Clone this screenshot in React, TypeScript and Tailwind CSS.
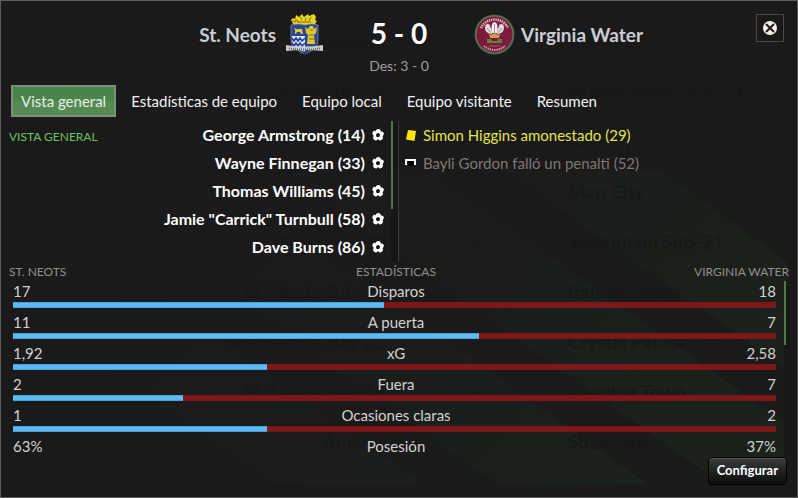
type Stat = {
  label: string;
  home: string;
  away: string;
  share?: number;
};

const tabs = ['Vista general', 'Estadísticas de equipo', 'Equipo local', 'Equipo visitante', 'Resumen'];

const goals = [
  'George Armstrong (14)',
  'Wayne Finnegan (33)',
  'Thomas Williams (45)',
  'Jamie "Carrick" Turnbull (58)',
  'Dave Burns (86)',
];

const stats: Stat[] = [
  { label: 'Disparos', home: '17', away: '18', share: 48.6 },
  { label: 'A puerta', home: '11', away: '7', share: 61.1 },
  { label: 'xG', home: '1,92', away: '2,58', share: 33.3 },
  { label: 'Fuera', home: '2', away: '7', share: 22.3 },
  { label: 'Ocasiones claras', home: '1', away: '2', share: 33.3 },
  { label: 'Posesión', home: '63%', away: '37%' },
];

const fixtures = [
  ['Cockfosters', '', 'Aylesbury'],
  ['Fulham Sub-18', '-', 'Huddersfield Sub-18'],
  ['Oldham', '', 'Burnley'],
  ['', '-', 'Man City'],
  ['Salford Sub-21', '-', 'Tottenham Sub-21'],
  ['St. Neots Sub-21', '-', 'Raunds Town'],
  ['Sunderland Sub-21', '-', 'Crystal Palace Sub-21'],
  ['St. Neots Sub-18', '-', 'Canning Town'],
  ['Amiens', '-', 'Sheff Utd'],
];

// fixture list that shows faintly through the dialog
function Backdrop() {
  return (
    <div aria-hidden="true" className="absolute inset-0 overflow-hidden">
      <svg className="absolute inset-0 w-full h-full" viewBox="0 0 798 498" preserveAspectRatio="none">
        <defs>
          <linearGradient id="fade" gradientUnits="userSpaceOnUse" x1="250" y1="150" x2="620" y2="485">
            <stop offset="0" stopColor="#1b211b" stopOpacity="0" />
            <stop offset="0.5" stopColor="#1b211b" stopOpacity="0.4" />
            <stop offset="1" stopColor="#1b211b" stopOpacity="1" />
          </linearGradient>
        </defs>
        <g fill="url(#fade)">
          <path d="M272 485H422L-20 170H-170Z" />
          <path d="M498 485H648L206 170H56Z" />
          <path d="M723 485H788V425L430 170H281Z" />
          <path d="M788 370V262L660 170H507Z" />
        </g>
      </svg>
      <div className="relative pt-4 text-[19px] leading-[50px] font-bold text-[#171917]">
        {fixtures.map(([home, score, away]) => (
          <div key={away} className="grid grid-cols-[386fr_182px_230fr]">
            <span className="text-right whitespace-nowrap">{home}</span>
            <span className="text-center">{score}</span>
            <span className="whitespace-nowrap">{away}</span>
          </div>
        ))}
      </div>
    </div>
  );
}

function HomeCrest() {
  return (
    <svg className="w-[37px] h-[42px] shrink-0" viewBox="0 0 37 42" aria-hidden="true">
      <path d="M7 11 5 7l2-2 2 1 1-4 3 2 3-3 2 3 4-3 1 2 5-2 2 3-1 3 2 1-2 3-3 1H9Z" fill="#e6d21f" />
      <path d="M9 7l3 1M14 4l2 3M20 5l-1 3M25 4l-2 4M11 9h14" stroke="#80701a" fill="none" />
      <path d="M6 8l4 1M10 7l3 2" stroke="#c25a2a" fill="none" />
      <path d="M5 12q7-2 14 0 7-2 13 0v15q0 9-13 14Q5 36 5 27Z" fill="#29439b" stroke="#8f98ac" strokeWidth="0.7" />
      <path d="M6 23h13v16Q6 35 6 27Z" fill="#dfe6f2" />
      <path d="M6 25l2 3 2-3 2 3 2-3 2 3 3-3M6 30l2 3 2-3 2 3 2-3 2 3 3-3" stroke="#29439b" strokeWidth="1.6" fill="none" />
      <path d="M8 14l2 2h6l1 5h-2l-1-2h-3l-1 2H9v-4Z" fill="#ddc729" />
      <path d="M24 13h3l1 3 3-2-1 6-2 2 1 9h-8l1-9-2-2-1-6 3 2Z" fill="#ddc729" />
      <path d="M24 17h3M23 22h5M23 26h5" stroke="#77702f" />
      <path d="M0 32q18 3 37 0v6q-19-2-37 0Z" fill="#c9cbcb" />
      <path d="M3 35.500q16 2 31 0" stroke="#666" strokeWidth="1.800" strokeDasharray="1 1" fill="none" />
      <path d="M16 38.500h6l-3 3Z" fill="#263b7d" />
    </svg>
  );
}

function AwayCrest() {
  return (
    <svg className="w-[41px] h-[41px] shrink-0" viewBox="0 0 41 41" aria-hidden="true">
      <circle cx="20.500" cy="20.500" r="20" fill="#23714a" />
      <circle cx="20.500" cy="20.500" r="18.500" fill="#7b1c3c" stroke="#b0795c" strokeWidth="0.7" />
      <path d="M7 14A15 15 0 0 1 34 14" stroke="#d9c3cb" strokeWidth="2.600" strokeDasharray="1.300 0.9" fill="none" />
      <path d="M10 32A16 16 0 0 0 31 32" stroke="#cdb2bc" strokeWidth="2" strokeDasharray="1.300 0.9" fill="none" />
      <path d="M18 19q-2-10 2.500-11 4.500 1 2.500 11Z" fill="#f1eeee" />
      <path d="M17 20q-6-1-6-6 0-4 3-4 3 1 2 3 2 2 2 7ZM24 20q6-1 6-6 0-4-3-4-3 1-2 3-2 2-2 7Z" fill="#e3dcde" />
      <path d="M20.500 10v9M13 14l4 5M28 14l-4 5" stroke="#8c6672" strokeWidth="0.7" />
      <path d="M15 19l2 2 3.500-2 3.500 2 2-2-1 5h-9Z" fill="#c9a352" />
      <path d="M13 25h4l1 2h5l1-2h4v4H13Z" fill="#6d7d35" />
      <path d="M15 32h11" stroke="#a9798a" strokeWidth="0.7" />
    </svg>
  );
}

function BallIcon() {
  return (
    <svg className="w-3 h-3 shrink-0" viewBox="0 0 12 12" aria-hidden="true">
      <circle cx="6" cy="6" r="6" fill="#fff" />
      <path d="M6 3.800 8.200 5.400 7.400 8H4.600L3.800 5.400Z" fill="#1a1a1a" />
      <path d="M1 0h4L3.200 2.500ZM8 0h4v3L9 2.500ZM0 4.500 1.800 7 0 10ZM12 5l-1.500 2.500L12 10ZM4 12l2-2 2 2Z" fill="#1a1a1a" />
    </svg>
  );
}

function StatRows({ stat }: { stat: Stat }) {
  return (
    <tbody className="text-[15px] leading-5 text-[#d2d2d2]">
      <tr>
        <td className="pl-1 pb-px">{stat.home}</td>
        <th scope="row" className="pr-1.5 pb-px font-normal text-center">{stat.label}</th>
        <td className="pr-[13px] pb-px text-right">{stat.away}</td>
      </tr>
      {stat.share !== undefined && (
        <tr>
          <td colSpan={3} className="pl-1 pr-[13px] pb-1">
            <div className="flex h-1.5 bg-[#7f1618] border-y border-[#74191b]">
              <div className="bg-[#5dbaf8] -my-px border-y border-[#4f9fd3]" style={{ width: `${stat.share}%` }} />
            </div>
          </td>
        </tr>
      )}
    </tbody>
  );
}

export default function App() {
  return (
    <main className="relative min-h-screen flex flex-col bg-[#1a1a1a] border border-[#5c5c5c] font-[Lato,sans-serif]">
      <Backdrop />

      <header className="relative grid grid-cols-[1fr_150px_1fr] items-start pt-3">
        <div className="flex items-center justify-end gap-2.5 pr-px">
          <h2 className="pt-0.5 text-[19px] font-bold text-[#c9ced3]">St. Neots</h2>
          <HomeCrest />
        </div>
        <div className="text-center">
          <p className="text-[28px] leading-10 font-bold text-white">5 - 0</p>
          <p className="pt-px text-sm leading-6 text-[#a09f9b]">Des: 3 - 0</p>
        </div>
        <div className="flex items-center gap-1.5 pt-px">
          <AwayCrest />
          <h2 className="pt-px text-[19px] font-bold text-[#c9ced3]">Virginia Water</h2>
        </div>
        <button type="button" aria-label="Cerrar" className="absolute top-[13px] right-[13px] w-7 h-7 flex items-center justify-center border border-[#4a4a4a]">
          <svg className="w-3.5 h-3.5" viewBox="0 0 14 14" aria-hidden="true">
            <circle cx="7" cy="7" r="7" fill="#f7f1e9" />
            <path d="M3 3l8 8M11 3l-8 8" stroke="#1a1a1a" strokeWidth="2" />
          </svg>
        </button>
      </header>

      <nav className="relative flex gap-[5px] pl-2.5 pt-[7px] pb-1">
        {tabs.map((tab, i) => (
          <button
            key={tab}
            type="button"
            className={
              i === 0
                ? 'h-8 px-2 border-2 border-[#7d8f7d] bg-linear-to-b from-[#498548] from-50% to-[#568a55] to-50% text-[15px] text-[#e6efe6]'
                : 'h-8 px-2.5 text-[15px] text-[#f2f2f2]'
            }
          >
            {tab}
          </button>
        ))}
      </nav>

      <section className="relative grid grid-cols-2 text-[15px] leading-7">
        <div className="flex justify-between border-r border-[#3a3a3a] pl-2">
          <h3 className="text-xs leading-8 text-[#6cc45f]">VISTA GENERAL</h3>
          <div className="flex gap-[7px]">
            <ul className="text-base leading-7 font-bold text-white">
              {goals.map((goal) => (
                <li key={goal} className="flex items-center justify-end gap-[7px]">
                  {goal}
                  <BallIcon />
                </li>
              ))}
            </ul>
            <div className="w-[7px] bg-[#161616]">
              <div className="w-0.5 h-[88px] bg-[#4b7a45]" />
            </div>
          </div>
        </div>
        <ul className="pl-1.5">
          <li className="flex items-center gap-1.5 text-[#e3e34f]">
            <svg className="w-3 h-3" viewBox="0 0 12 12" aria-hidden="true">
              <path d="M3 1 11 2 9.500 12 1 10.500Z" fill="#ffe600" />
            </svg>
            Simon Higgins amonestado (29)
          </li>
          <li className="flex items-center gap-1.5 text-[#7f7873]">
            <svg className="w-3 h-3" viewBox="0 0 12 12" aria-hidden="true">
              <path d="M3 3h6v6H3Z" fill="#000" />
              <path d="M1 8V3h9v5" stroke="#fff" strokeWidth="2" fill="none" />
            </svg>
            Bayli Gordon falló un penalti (52)
          </li>
        </ul>
      </section>

      <section className="relative px-2 pt-0.5">
        <table className="w-full table-fixed border-collapse">
          <thead className="text-xs leading-[18px] text-[#92918c]">
            <tr>
              <th scope="col" className="p-0 font-normal text-left">ST. NEOTS</th>
              <th scope="col" className="pr-1.5 font-normal">ESTADÍSTICAS</th>
              <th scope="col" className="p-0 font-normal text-right">VIRGINIA WATER</th>
            </tr>
          </thead>
          {stats.map((stat) => (
            <StatRows key={stat.label} stat={stat} />
          ))}
        </table>
        <div className="absolute top-5 bottom-0 right-[7px] w-1.5 bg-[#171917]">
          <div className="w-0.5 h-16 bg-[#4b7a45]" />
        </div>
      </section>

      <footer className="relative flex justify-end px-2.5 pb-3">
        <button
          type="button"
          className="h-7 px-2 rounded-sm border border-black bg-linear-to-b from-[#3a3c3a] to-[#0c0e0c] text-[13px] font-bold text-white shadow-[inset_0_1px_0_#5a5a5a]"
        >
          Configurar
        </button>
      </footer>
    </main>
  );
}
